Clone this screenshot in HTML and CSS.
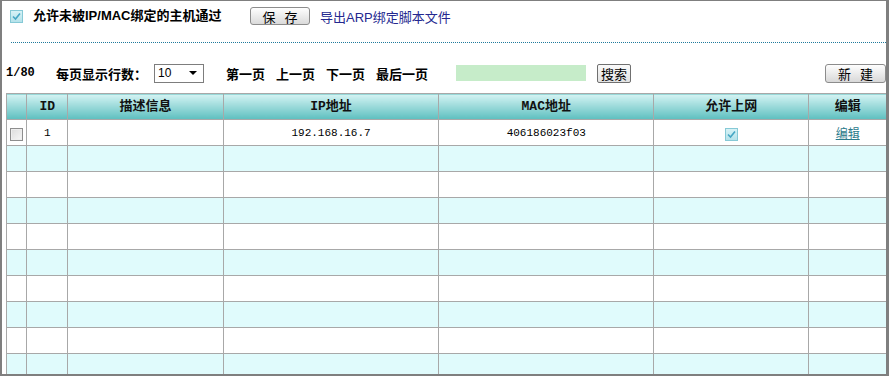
FILE: index.html
```html
<!DOCTYPE html>
<html lang="zh-CN">
<head>
  <meta charset="UTF-8">
  <title>IP/MAC绑定</title>
  <link rel="stylesheet" href="styles.css">
</head>
<body>
<div class="frame">
  <div class="topbar">
    <span class="check check-on"><svg width="11" height="11" viewBox="0 0 11 11"><path d="M2 5.5 L4.5 8 L9 2.5" fill="none" stroke="#45a6c4" stroke-width="1.6"/></svg></span>
    <span class="title">允许未被IP/MAC绑定的主机通过</span>
    <button class="btn btn-save btn-spaced">保存</button>
    <a class="export" href="#">导出ARP绑定脚本文件</a>
  </div>

  <div class="divider"></div>

  <div class="toolbar">
    <span class="pageno">1/80</span>
    <span class="perpage">每页显示行数：</span>
    <div class="select"><span class="select-val">10</span><span class="arrow"></span></div>
    <a class="pager first" href="#">第一页</a>
    <a class="pager" href="#">上一页</a>
    <a class="pager" href="#">下一页</a>
    <a class="pager last" href="#">最后一页</a>
    <span class="search-box"></span>
    <button class="btn btn-search">搜索</button>
    <button class="btn btn-new btn-spaced">新建</button>
  </div>

  <table class="grid">
    <colgroup>
      <col class="c-sel"><col class="c-id"><col class="c-desc"><col class="c-ip"><col class="c-mac"><col class="c-allow"><col class="c-edit">
    </colgroup>
    <thead>
      <tr><th></th><th>ID</th><th>描述信息</th><th>IP地址</th><th>MAC地址</th><th>允许上网</th><th>编辑</th></tr>
    </thead>
    <tbody>
      <tr>
        <td><span class="check check-off"></span></td>
        <td class="mono">1</td>
        <td></td>
        <td class="mono">192.168.16.7</td>
        <td class="mono">406186023f03</td>
        <td><span class="check check-on"><svg width="11" height="11" viewBox="0 0 11 11"><path d="M2 5.5 L4.5 8 L9 2.5" fill="none" stroke="#45a6c4" stroke-width="1.6"/></svg></span></td>
        <td><a class="edit" href="#">编辑</a></td>
      </tr>
      <tr class="alt"><td></td><td></td><td></td><td></td><td></td><td></td><td></td></tr>
      <tr><td></td><td></td><td></td><td></td><td></td><td></td><td></td></tr>
      <tr class="alt"><td></td><td></td><td></td><td></td><td></td><td></td><td></td></tr>
      <tr><td></td><td></td><td></td><td></td><td></td><td></td><td></td></tr>
      <tr class="alt"><td></td><td></td><td></td><td></td><td></td><td></td><td></td></tr>
      <tr><td></td><td></td><td></td><td></td><td></td><td></td><td></td></tr>
      <tr class="alt"><td></td><td></td><td></td><td></td><td></td><td></td><td></td></tr>
      <tr><td></td><td></td><td></td><td></td><td></td><td></td><td></td></tr>
      <tr class="alt"><td></td><td></td><td></td><td></td><td></td><td></td><td></td></tr>
    </tbody>
  </table>
</div>
</body>
</html>
```

FILE: styles.css
```css
body {
  margin: 0;
  font-family: "Noto Sans CJK SC", sans-serif;
  font-size: 13px;
  color: #000;
  background: #fff;
}
.frame {
  width: 889px;
  height: 376px;
  box-sizing: border-box;
  border-style: solid;
  border-color: #7f7f7f;
  border-width: 1px 3px 2px 2px;
  overflow: hidden;
  background: #fff;
}

/* top line */
.topbar {
  display: flex;
  align-items: center;
  height: 18px;
  padding: 6px 0 0 8px;
}
.check {
  display: inline-flex;
  align-items: center;
  justify-content: center;
  width: 13px;
  height: 13px;
  box-sizing: border-box;
  flex-shrink: 0;
}
.check-on {
  border: 1px solid #86c9d6;
  background: linear-gradient(#d6f2f6, #b5e2ea);
}
.check-off {
  border: 1px solid #8e8e8e;
  background: linear-gradient(135deg, #dcdcdc, #f7f7f7);
  box-shadow: inset 0 0 0 1px #eee;
}
.title {
  width: 217px;
  margin-left: 10px;
  font-family: "Liberation Sans", "Noto Sans CJK SC", sans-serif;
  font-weight: bold;
  font-size: 13px;
  line-height: 18px;
  white-space: nowrap;
  flex-shrink: 0;
}
.btn {
  font-family: "Noto Sans CJK SC", sans-serif;
  font-size: 13px;
  line-height: 1;
  color: #000;
  padding: 0;
  cursor: pointer;
  box-sizing: border-box;
}
.btn-spaced {
  letter-spacing: 9px;
  padding-left: 9px;
}
.btn-save {
  width: 60px;
  height: 18px;
  border: 1px solid #8c8c8c;
  border-radius: 3px;
  background: linear-gradient(#fefefe, #dadada);
}
.export {
  margin-left: 10px;
  color: #24288f;
  text-decoration: none;
  font-family: "Liberation Sans", "Noto Sans CJK SC", sans-serif;
  font-size: 13px;
  white-space: nowrap;
}

.divider {
  margin: 17px 0 0 9px;
  border-top: 1px dotted #1f7a9c;
}

/* paging line */
.toolbar {
  display: flex;
  align-items: center;
  height: 20px;
  margin-top: 20px;
  padding-left: 4px;
  font-weight: bold;
  white-space: nowrap;
}
.pageno {
  width: 50px;
  font-family: "Liberation Mono", monospace;
  font-size: 12px;
}
.perpage {
  width: 98px;
}
.select {
  display: flex;
  align-items: center;
  justify-content: space-between;
  width: 50px;
  height: 19px;
  box-sizing: border-box;
  border: 1px solid #7d7d7d;
  padding: 0 6px 0 3px;
  font-family: "Liberation Sans", sans-serif;
  font-weight: normal;
  font-size: 12px;
  background: #fff;
}
.arrow {
  width: 0;
  height: 0;
  border-left: 4px solid transparent;
  border-right: 4px solid transparent;
  border-top: 4px solid #000;
}
.pager {
  width: 50px;
  color: #000;
  text-decoration: none;
}
.pager.first {
  margin-left: 22px;
}
.pager.last {
  width: 80px;
}
.search-box {
  width: 130px;
  height: 16px;
  background: #c6ecc9;
}
.btn-search {
  margin-left: 11px;
  width: 34px;
  height: 19px;
  border: 1px solid #707070;
  border-radius: 2px;
  background: linear-gradient(#fafafa, #e2e2e2);
  font-weight: normal;
}
.btn-new {
  margin-left: auto;
  width: 61px;
  height: 19px;
  border: 1px solid #8c8c8c;
  border-radius: 3px;
  background: linear-gradient(#fefefe, #d8d8d8);
  font-weight: normal;
}

/* list */
.grid {
  margin: 10px 0 0 4px;
  width: 881px;
  table-layout: fixed;
  border-collapse: collapse;
}
.c-sel { width: 20px; }
.c-id { width: 41px; }
.c-desc { width: 154px; }
.c-ip { width: 214px; }
.c-mac { width: 213px; }
.c-allow { width: 154px; }
.c-edit { width: 77px; }
.grid th,
.grid td {
  border: 1px solid #a8a8a8;
  height: 25px;
  padding: 0;
  text-align: center;
  vertical-align: middle;
  line-height: 16px;
}
.grid th {
  background: linear-gradient(#d4f3f3, #5dbfbf);
  font-family: "Liberation Mono", "Noto Sans CJK SC", monospace;
  font-size: 13px;
  font-weight: bold;
  color: #111;
}
.grid td {
  font-size: 12px;
}
.grid td .check {
  vertical-align: middle;
}
.grid tr.alt td {
  background: #e0fbfc;
}
.grid td.mono {
  font-family: "Liberation Mono", monospace;
  font-size: 11px;
}
.edit {
  color: #2b7a8b;
  text-decoration: underline;
  font-size: 12px;
}
```
